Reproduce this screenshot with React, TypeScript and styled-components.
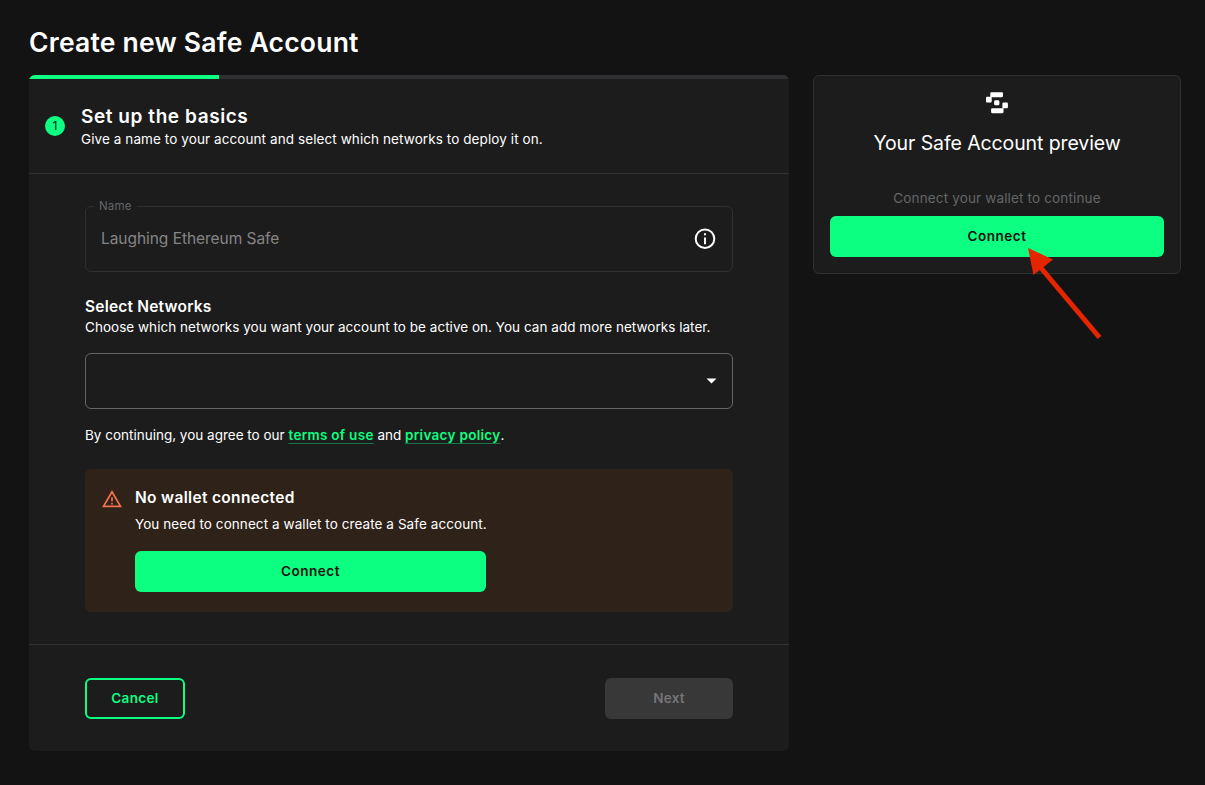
import React from 'react';
import styled, { createGlobalStyle, css } from 'styled-components';

const colors = {
  page: '#121312',
  paper: '#1c1c1c',
  line: '#303033',
  green: '#0cff80',
  text: '#ffffff',
  muted: '#636669',
};

const GlobalStyle = createGlobalStyle`
  *, *::before, *::after { box-sizing: border-box; }
  body {
    margin: 0;
    min-height: 785px;
    background: ${colors.page};
    color: ${colors.text};
    font-family: Inter, "Liberation Sans", sans-serif;
    font-size: 13.5px;
    line-height: 20px;
    overflow: hidden;
  }
  h1, h2, h3, p { margin: 0; }
`;

const Page = styled.main`
  padding: 24px 24px 0 29px;
`;

const Title = styled.h1`
  font-size: 26.5px;
  font-weight: 600;
  line-height: 36px;
  letter-spacing: 0.22px;
  white-space: nowrap;
`;

const Columns = styled.div`
  display: grid;
  grid-template-columns: 760px 368px;
  gap: 24px;
  align-items: start;
  margin-top: 15px;
`;

const Card = styled.section`
  height: 676px;
  background: ${colors.paper};
  border-radius: 6px;
  overflow: hidden;
`;

const Progress = styled.div`
  height: 4px;
  background: ${colors.line};
`;

const ProgressBar = styled.div`
  width: 25%;
  height: 100%;
  background: ${colors.green};
`;

const StepHeader = styled.header`
  display: flex;
  align-items: center;
  gap: 16px;
  height: 95px;
  padding: 0 16px;
  border-bottom: 1px solid ${colors.line};
`;

const StepNumber = styled.span`
  display: grid;
  place-items: center;
  width: 20px;
  height: 20px;
  border-radius: 50%;
  background: ${colors.green};
  color: ${colors.page};
  font-size: 12px;
  line-height: 20px;
`;

const StepTitle = styled.h2`
  padding-top: 1px;
  font-size: 19px;
  font-weight: 600;
  line-height: 25px;
  letter-spacing: 0.57px;
`;

const Copy = styled.p<{ $spacing?: number }>`
  letter-spacing: ${({ $spacing = 0 }) => $spacing}px;
  white-space: nowrap;
`;

const FormBody = styled.div`
  height: 471px;
  padding: 32px 56px 0;
  border-bottom: 1px solid ${colors.line};
`;

const NameField = styled.fieldset`
  display: flex;
  align-items: center;
  justify-content: space-between;
  height: 73px;
  margin: -7px 0 0;
  padding: 0 16px 7px 15px;
  border: 1px solid ${colors.line};
  border-radius: 6px;
  color: #858585;
  font-size: 15.5px;
  letter-spacing: -0.05px;
`;

const FieldLabel = styled.legend`
  margin-left: -7px;
  padding: 0 5px;
  color: ${colors.muted};
  font-size: 11.5px;
  line-height: 14px;
  letter-spacing: 0.2px;
`;

const SectionTitle = styled.h3`
  font-size: 15.5px;
  font-weight: 600;
  line-height: 22px;
  letter-spacing: 0.33px;
`;

const NetworksTitle = styled(SectionTitle)`
  margin-top: 24px;
  line-height: 21px;
  letter-spacing: 0.2px;
`;

const Select = styled.div`
  display: flex;
  align-items: center;
  justify-content: flex-end;
  height: 56px;
  margin: 16px 0;
  padding-right: 15px;
  border: 1px solid #636669;
  border-radius: 6px;
`;

const Link = styled.a`
  color: ${colors.green};
  font-weight: 600;
  letter-spacing: 0.3px;
  text-decoration: underline;
  text-decoration-color: rgba(18, 255, 128, 0.4);
  text-decoration-thickness: 1px;
  text-underline-offset: 3px;
`;

const Warning = styled.div`
  display: flex;
  align-items: flex-start;
  gap: 13px;
  height: 143px;
  margin-top: 24px;
  padding: 18px 17px 0;
  background: #2f2218;
  border-radius: 6px;
`;

const WarningContent = styled.div`
  width: 351px;
`;

const Button = styled.button<{ $kind?: 'primary' | 'outline' | 'disabled'; $width?: string }>`
  display: flex;
  align-items: center;
  justify-content: center;
  width: ${({ $width = '100%' }) => $width};
  height: 41px;
  padding: 0 0 1px;
  border: 0;
  border-radius: 6px;
  background: ${colors.green};
  color: ${colors.page};
  font: 600 13.5px/20px Inter, "Liberation Sans", sans-serif;
  letter-spacing: 0.5px;
  ${({ $kind }) => $kind === 'outline' && css`
    border: 2px solid ${colors.green};
    background: transparent;
    color: ${colors.green};
    letter-spacing: 0.35px;
  `}
  ${({ $kind }) => $kind === 'disabled' && css`
    background: #383838;
    color: #757575;
    letter-spacing: 0.2px;
  `}
`;

const WarningText = styled(Copy)`
  margin: 5px 0 17px;
`;

const Actions = styled.footer`
  display: flex;
  justify-content: space-between;
  padding: 33px 56px;
`;

const Preview = styled.aside`
  display: flex;
  flex-direction: column;
  align-items: center;
  height: 199px;
  padding: 16px 16px 0;
  border: 1px solid ${colors.line};
  border-radius: 6px;
  background: ${colors.paper};
`;

const PreviewTitle = styled.h2`
  margin-top: 15px;
  font-size: 19.5px;
  font-weight: 400;
  line-height: 28px;
  letter-spacing: -0.1px;
  white-space: nowrap;
`;

const PreviewHint = styled(Copy)`
  margin: 31px 0 8px;
  color: ${colors.muted};
`;

const Pointer = styled.svg`
  position: absolute;
  left: 1020px;
  top: 240px;
  pointer-events: none;
`;

const SafeLogo = () => (
  <svg width="22" height="22" viewBox="0 0 22 22" fill="#fff">
    <path d="M5.5.3h10.300c.7 0 1.200.5 1.200 1.200v2.600c0 .7-.5 1.200-1.200 1.200H5.700v3.900c0 .8-.5 1.300-1.300 1.300H1.300C.5 10.500 0 10 0 9.200V6c0-.8.5-1.300 1.300-1.300h3V1.500C4.300.8 4.800.3 5.500.3Z" />
    <rect x="8.100" y="8.300" width="5.300" height="5" rx="1.400" />
    <path d="M17.700 10.500h2.900c.8 0 1.300.5 1.300 1.300V15c0 .8-.5 1.300-1.300 1.300h-3.100v3.800c0 .7-.5 1.200-1.200 1.200H6.300c-.7 0-1.200-.5-1.200-1.200v-2.600c0-.7.5-1.200 1.200-1.200h10.100v-4.500c0-.8.5-1.300 1.300-1.300Z" />
  </svg>
);

const InfoIcon = () => (
  <svg width="22" height="22" viewBox="0 0 22 22" fill="none" stroke="#fff" strokeWidth="2">
    <circle cx="11" cy="10.700" r="9.300" />
    <path d="M11 9.400v6.800M11 5.200v2" />
  </svg>
);

const WarningIcon = () => (
  <svg width="20" height="22" viewBox="0 0 20 22" fill="none" stroke="#f4714f" strokeWidth="1.700">
    <path d="M10 4.800 18.500 19.400H1.500Z" />
    <path d="M10 10.300v4M10 15.700v1.800" />
  </svg>
);

export default function App() {
  return (
    <Page>
      <GlobalStyle />
      <Title>Create new Safe Account</Title>
      <Columns>
        <Card>
          <Progress><ProgressBar /></Progress>
          <StepHeader>
            <StepNumber>1</StepNumber>
            <div>
              <StepTitle>Set up the basics</StepTitle>
              <Copy $spacing={0.09}>Give a name to your account and select which networks to deploy it on.</Copy>
            </div>
          </StepHeader>
          <FormBody>
            <NameField>
              <FieldLabel>Name</FieldLabel>
              <span>Laughing Ethereum Safe</span>
              <InfoIcon />
            </NameField>
            <NetworksTitle>Select Networks</NetworksTitle>
            <Copy $spacing={0.03}>Choose which networks you want your account to be active on. You can add more networks later.</Copy>
            <Select>
              <svg width="11" height="6" viewBox="0 0 11 6"><path d="M.5.5h10l-5 5Z" fill="#fff" /></svg>
            </Select>
            <Copy>By continuing, you agree to our <Link>terms of use</Link> and <Link>privacy policy</Link>.</Copy>
            <Warning>
              <WarningIcon />
              <WarningContent>
                <SectionTitle>No wallet connected</SectionTitle>
                <WarningText $spacing={0.075}>You need to connect a wallet to create a Safe account.</WarningText>
                <Button>Connect</Button>
              </WarningContent>
            </Warning>
          </FormBody>
          <Actions>
            <Button $kind="outline" $width="100px">Cancel</Button>
            <Button $kind="disabled" $width="128px">Next</Button>
          </Actions>
        </Card>
        <Preview>
          <SafeLogo />
          <PreviewTitle>Your Safe Account preview</PreviewTitle>
          <PreviewHint $spacing={0.15}>Connect your wallet to continue</PreviewHint>
          <Button>Connect</Button>
        </Preview>
      </Columns>
      <Pointer width="90" height="110" viewBox="0 0 90 110">
        <path d="M21 28 79.500 97.500" stroke="#e52500" strokeWidth="5" />
        <path d="M8 8 33 19.500 13.500 35Z" fill="#e52500" />
      </Pointer>
    </Page>
  );
}
